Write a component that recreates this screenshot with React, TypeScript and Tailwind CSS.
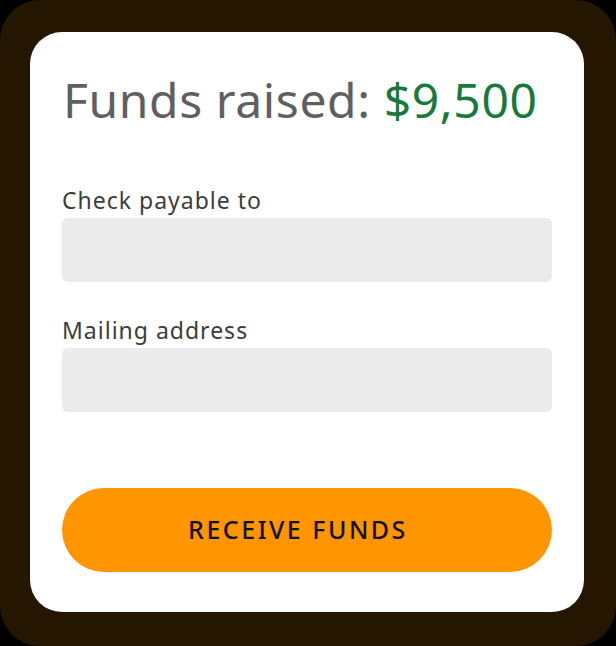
export default function App() {
  return (
    <div className="w-[616px] h-[646px] bg-black" style={{ fontFamily: '"Noto Sans", sans-serif' }}>
      <div className="w-full h-full bg-[#241600] rounded-[40px] pt-8 pl-[30px] pr-8 pb-[34px] flex">
        <div className="flex-1 bg-white rounded-[32px] px-8 pt-10 pb-10 flex flex-col">
          <h1 className="text-[48px] leading-[56px] text-[#5f5f5f] pl-[1px] tracking-[0.6px]">
            Funds raised: <span className="text-[#17793b]">$9,500</span>
          </h1>

          <form className="mt-[58px] flex flex-col flex-1" onSubmit={e => e.preventDefault()}>
            <label className="block text-[23px] leading-[28px] text-[#3d3d3d] tracking-[1px]">Check payable to</label>
            <input className="mt-1 h-16 w-full rounded-md bg-[#ebebeb] outline-none px-4" />

            <label className="block mt-[34px] text-[23px] leading-[28px] text-[#3d3d3d] tracking-[1px]">Mailing address</label>
            <input className="mt-1 h-16 w-full rounded-md bg-[#ebebeb] outline-none px-4" />

            <button
              type="submit"
              className="mt-auto h-[84px] w-full rounded-full bg-[#ff9500] text-[#111] text-[25px] tracking-[2.5px] font-medium pr-[18px]"
            >
              RECEIVE FUNDS
            </button>
          </form>
        </div>
      </div>
    </div>
  );
}
